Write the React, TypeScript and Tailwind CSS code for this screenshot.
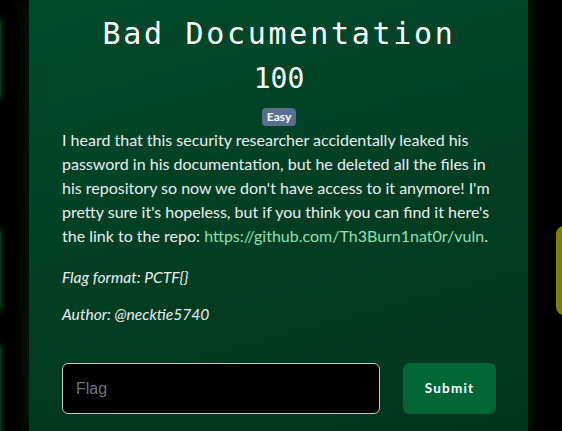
import React from "react";

export default function App() {
  return (
    <div className="relative w-[562px] h-[431px] overflow-hidden bg-black">
      {/* background cards behind the modal (dimmed) */}
      <div className="absolute left-[-300px] top-[17px] w-[300.5px] h-[83px] rounded-md border border-[#0a3a1c] shadow-[0_0_7px_rgba(0,140,60,0.55)]" />
      <div className="absolute left-[-300px] top-[228px] w-[300.5px] h-[84px] rounded-md border border-[#0a3a1c] shadow-[0_0_7px_rgba(0,140,60,0.55)]" />
      <div className="absolute left-[-300px] top-[343px] w-[300.5px] h-[120px] rounded-md border border-[#0a3a1c] shadow-[0_0_7px_rgba(0,140,60,0.55)]" />
      <div className="absolute left-[556px] top-[226px] w-[100px] h-[89px] rounded-lg bg-[#808000]" />

      {/* modal */}
      <div className="absolute left-[29px] top-0 w-[499px] h-[431px] bg-[linear-gradient(165deg,#004a2c,#00341d)] shadow-[0_0_16px_rgba(0,50,25,0.8)]">
        <div className="flex flex-col pl-[33px] pr-[32px]">
          <h1 className="mt-[16px] text-center text-white text-[30px] leading-[36px] tracking-[2.7px] font-normal font-['DejaVu_Sans_Mono',monospace]">
            Bad Documentation
          </h1>
          <div className="mt-[9px] text-center text-white text-[28px] leading-[36px] font-['DejaVu_Sans_Mono',monospace]">
            100
          </div>
          <div className="mt-[11px] flex justify-center">
            <span className="inline-flex items-center justify-center h-[18px] px-[5px] rounded-[4px] bg-[#5a6e8f] text-white text-[12px] font-bold font-['Lato',sans-serif] leading-none">
              Easy
            </span>
          </div>
          <div className="mt-[2px] text-[16px] leading-[24px] text-[#eeeeee] font-['Lato',sans-serif]">
            <p>
              I heard that this security researcher accidentally leaked his password in his documentation, but he deleted all the files in his repository so now we don't have access to it anymore! I'm pretty sure it's hopeless, but if you think you can find it here's the link to the repo:{" "}
              <span className="text-[#8fe0b0]">https://github.com/Th3Burn1nat0r/vuln</span>.
            </p>
            <p className="mt-[17px] italic text-[15.6px]">Flag format: PCTF{"{}"}</p>
            <p className="mt-[13px] italic text-[15.6px]">Author: @necktie5740</p>
          </div>
          <div className="mt-[37px] flex items-center gap-[23px]">
            <div className="flex items-center w-[318px] shrink-0 h-[51px] rounded-[6px] border border-[#c8c8c8] bg-black px-[13px]">
              <span className="text-[16px] text-[#6c757d] font-['Liberation_Sans',Arial,sans-serif]">Flag</span>
            </div>
            <button className="w-[93px] shrink-0 h-[51px] rounded-[6px] bg-[#006634] text-white text-[13.5px] font-bold tracking-[1.2px] font-['Lato',sans-serif]">
              Submit
            </button>
          </div>
        </div>
      </div>
    </div>
  );
}
